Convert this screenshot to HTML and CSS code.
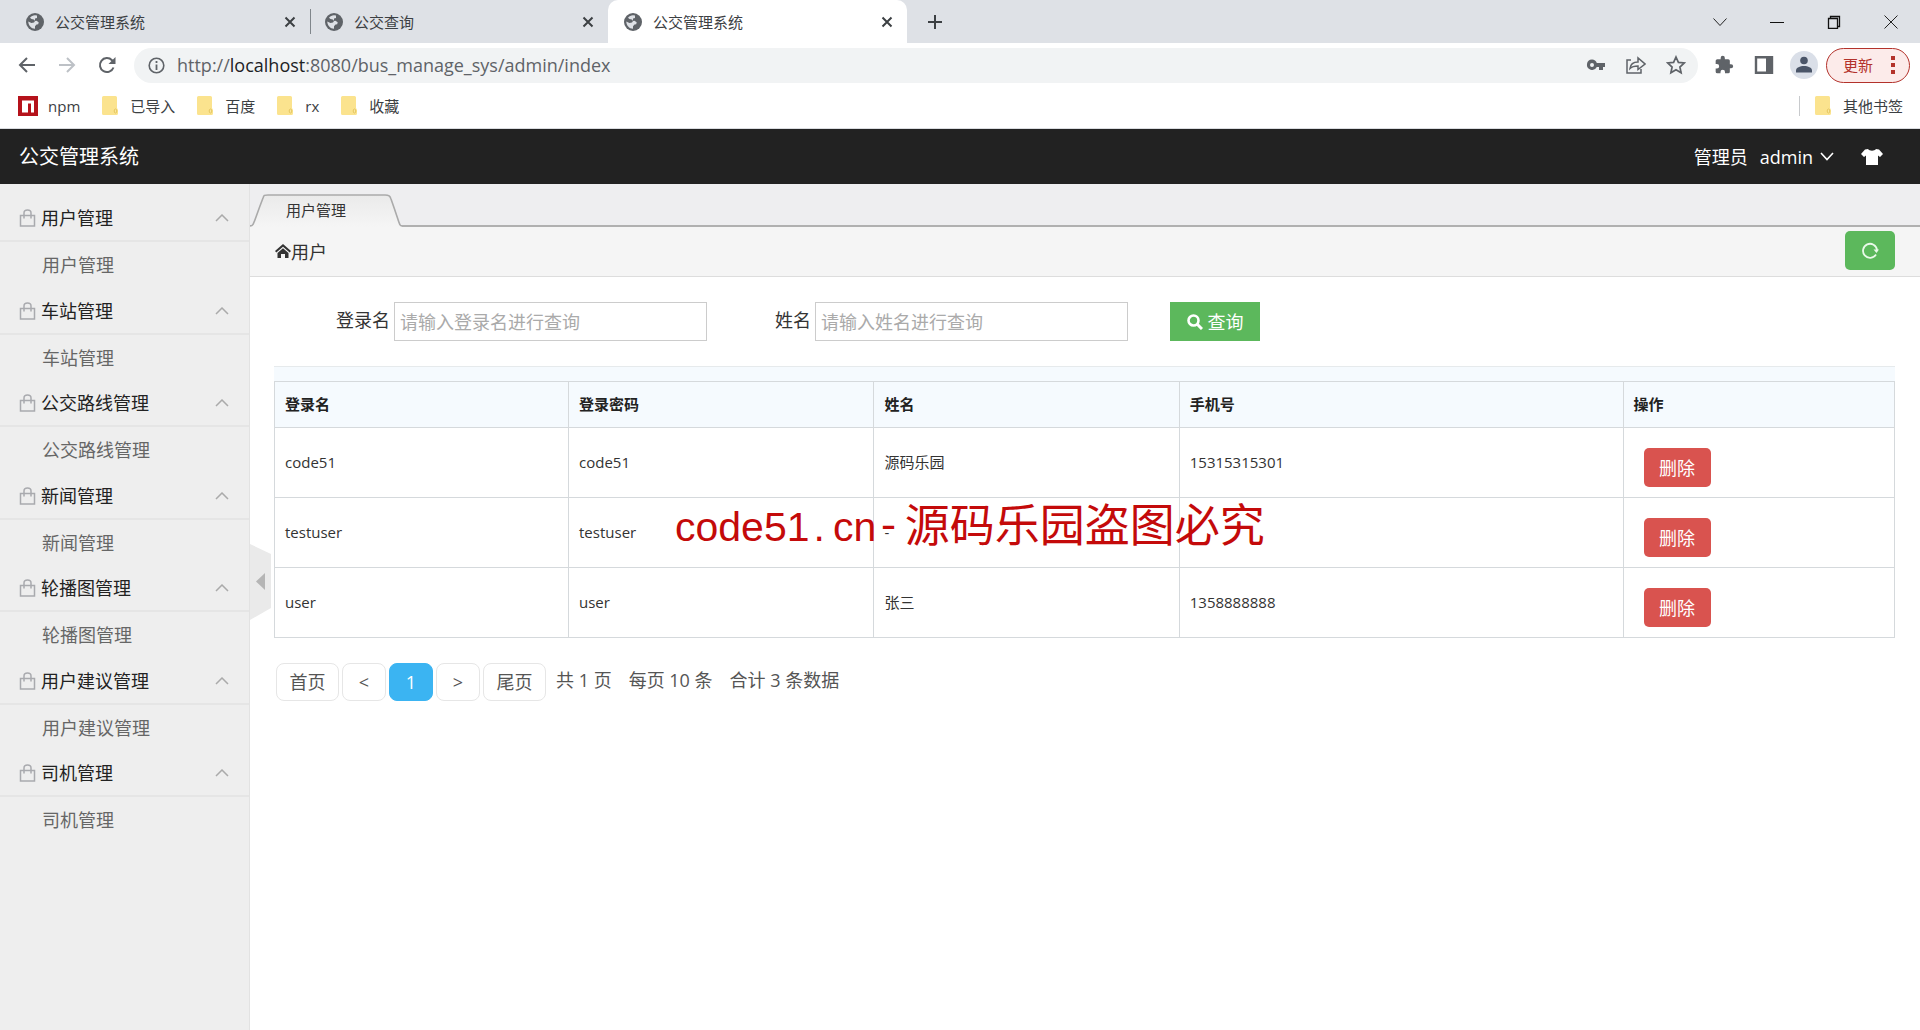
FILE: index.html
```html
<!DOCTYPE html>
<html lang="zh-CN">
<head>
<meta charset="utf-8">
<title>公交管理系统</title>
<link rel="stylesheet" href="styles.css">
</head>
<body>
<svg class="defs" width="0" height="0" aria-hidden="true">
  <symbol id="globe" viewBox="0 0 18 18"><circle cx="9" cy="9" r="9" fill="#5f6368"/><path d="M9 2.2c-2 .1-3.800.9-5 2.500l1.500 1.400 2.300.3 1.200 1.600-1 1.500-2.600.5L2.300 8.500c0 4 3 7.200 6.700 7.200v-2.500l1.500-1.700 1.700-.2.500-2-2.200-1.500-1.600.2.100-2.500 2-.500V2.500z" fill="#dee1e6"/></symbol>
  <symbol id="cross" viewBox="0 0 12 12"><path d="M1.500 1.500l9 9m0-9l-9 9" fill="none" stroke="#3c4043" stroke-width="2"/></symbol>
  <symbol id="folder" viewBox="0 0 16 19"><path d="M1.500 0h12A1.500 1.500 0 0 1 15 1.500V12l1 2v3.500a1.500 1.500 0 0 1-1.500 1.500h-13A1.500 1.500 0 0 1 0 17.500v-16A1.500 1.500 0 0 1 1.500 0z" fill="#fbe38e"/><ellipse cx="13.500" cy="15" rx="1.300" ry="2" fill="#fbe79d" stroke="#e5c65f"/></symbol>
  <symbol id="bag" viewBox="0 0 16 18"><path d="M1 6.500h14v10.500H1zM4.500 9.500V4a3.500 3 0 0 1 7 0v5.500" fill="none" stroke="#a9aaae" stroke-width="1.500"/></symbol>
  <symbol id="up" viewBox="0 0 14 8"><path d="M1 7l6-6 6 6" fill="none" stroke="#aaa" stroke-width="1.500"/></symbol>
</svg>

<div class="tabstrip">
  <div class="tab"><svg class="i18"><use href="#globe"/></svg><span class="tab-title">公交管理系统</span><button class="plain" aria-label="关闭"><svg class="i12"><use href="#cross"/></svg></button></div>
  <div class="tab tab-split"><svg class="i18"><use href="#globe"/></svg><span class="tab-title">公交查询</span><button class="plain" aria-label="关闭"><svg class="i12"><use href="#cross"/></svg></button></div>
  <div class="tab tab-active"><svg class="i18"><use href="#globe"/></svg><span class="tab-title">公交管理系统</span><button class="plain" aria-label="关闭"><svg class="i12"><use href="#cross"/></svg></button></div>
  <button class="plain new-tab" aria-label="新标签页"><svg width="16" height="16"><path d="M8 1v14M1 8h14" stroke="#3c4043" stroke-width="2"/></svg></button>
  <div class="win">
    <button class="plain" aria-label="搜索标签页"><svg width="14" height="14"><path d="M.5 3.500L7 10.500l6.500-7" fill="none" stroke="#222"/></svg></button>
    <button class="plain" aria-label="最小化"><svg width="14" height="14"><path d="M0 7.500h14" stroke="#111"/></svg></button>
    <button class="plain" aria-label="还原"><svg width="14" height="14"><path d="M1.500 3.500h9v10h-9zM3.500 3.500v-2h9v10h-2" fill="none" stroke="#111" stroke-width="1.300"/></svg></button>
    <button class="plain" aria-label="关闭窗口"><svg width="14" height="14"><path d="M.5.5l13 13m0-13l-13 13" stroke="#222"/></svg></button>
  </div>
</div>

<div class="toolbar">
  <div class="nav-buttons">
    <button class="plain" aria-label="后退"><svg width="18" height="18"><path d="M17 9H2m7-7L2 9l7 7" fill="none" stroke="#5f6368" stroke-width="2"/></svg></button>
    <button class="plain" aria-label="前进"><svg width="18" height="18"><path d="M1 9h15M9 2l7 7-7 7" fill="none" stroke="#bdc1c6" stroke-width="2"/></svg></button>
    <button class="plain" aria-label="刷新"><svg width="18" height="18"><path d="M15.500 11.500A7 7 0 1 1 14 4.200L16 6.500" fill="none" stroke="#5f6368" stroke-width="2"/><path d="M17.500 1v7h-7z" fill="#5f6368"/></svg></button>
  </div>
  <div class="omnibox">
    <svg width="17" height="17"><circle cx="8.500" cy="8.500" r="7.300" fill="none" stroke="#5f6368" stroke-width="1.600"/><path d="M8.500 7.500V13M8.500 4v2" stroke="#5f6368" stroke-width="1.800"/></svg>
    <span class="url">http://<b>localhost</b>:8080/bus_manage_sys/admin/index</span>
    <div class="omni-icons">
      <button class="plain" aria-label="密码"><svg width="20" height="18"><path fill-rule="evenodd" d="M6 3.500a5.200 5.200 0 0 1 4.800 3.500H19v4h-2v3h-4v-3h-2.200A5.200 5.200 0 1 1 6 3.500zM6 7a2 2 0 1 0 0 4 2 2 0 0 0 0-4z" fill="#5f6368"/></svg></button>
      <button class="plain" aria-label="分享"><svg width="20" height="18"><path d="M5 4H1v13h14v-4M4 12.500C4.500 8 7.500 6 12 6V2l7 6-7 5.500V10c-3.500 0-6 .5-8 2.500z" fill="none" stroke="#5f6368" stroke-width="1.500"/></svg></button>
      <button class="plain" aria-label="收藏此页"><svg width="20" height="20"><path d="M10 2l2.400 5.400 5.900.6-4.400 4 1.200 5.800-5.100-3-5.100 3 1.200-5.800-4.400-4 5.900-.6z" fill="none" stroke="#5f6368" stroke-width="1.700"/></svg></button>
    </div>
  </div>
  <div class="tool-icons">
    <button class="plain" aria-label="扩展程序"><svg width="20" height="20" viewBox="0 0 24 24"><path d="M20.500 11H19V7a2 2 0 0 0-2-2h-4V3.500a2.500 2.500 0 0 0-5 0V5H4a2 2 0 0 0-2 2v3.800h1.500a2.700 2.700 0 0 1 0 5.400H2V20a2 2 0 0 0 2 2h3.800v-1.500a2.700 2.700 0 0 1 5.400 0V22H17a2 2 0 0 0 2-2v-4h1.500a2.500 2.500 0 0 0 0-5z" fill="#5f6368"/></svg></button>
    <button class="plain" aria-label="侧边栏"><svg width="20" height="18"><path d="M2 1.200h16v15.600H2z" fill="none" stroke="#5f6368" stroke-width="2.400"/><path d="M12 1h6v16h-6z" fill="#5f6368"/></svg></button>
    <button class="plain avatar" aria-label="个人资料"><svg width="28" height="28"><circle cx="14" cy="14" r="14" fill="#dadfe8"/><circle cx="14" cy="9.500" r="3.800" fill="#4a5568"/><path d="M6 21.500v-2c0-3 4-4.500 8-4.500s8 1.500 8 4.500v2z" fill="#4a5568"/></svg></button>
  </div>
  <button class="update">更新<svg width="4" height="18"><path d="M0 0h4v4H0zM0 7h4v4H0zM0 14h4v4H0z" fill="#b3322b"/></svg></button>
</div>

<div class="bookmarks">
  <a href="#" class="mark"><svg class="npm" width="20" height="20"><path d="M0 0h20v20H0z" fill="#b5121b"/><path d="M4 4.500h12v12h-3v-9h-3v9H4z" fill="#fff"/></svg>npm</a>
  <a href="#" class="mark"><svg class="fold"><use href="#folder"/></svg>已导入</a>
  <a href="#" class="mark"><svg class="fold"><use href="#folder"/></svg>百度</a>
  <a href="#" class="mark"><svg class="fold"><use href="#folder"/></svg>rx</a>
  <a href="#" class="mark"><svg class="fold"><use href="#folder"/></svg>收藏</a>
  <a href="#" class="mark other"><svg class="fold"><use href="#folder"/></svg>其他书签</a>
</div>

<header class="header">
  <a href="#" class="brand">公交管理系统</a>
  <div class="account">
    <span>管理员</span>
    <button class="plain user">admin<svg width="14" height="9"><path d="M1 1l6 6.500L13 1" fill="none" stroke="#fff" stroke-width="1.600"/></svg></button>
    <button class="plain skin" aria-label="换肤"><svg width="22" height="17"><path d="M7 1c1.500 2.200 6.500 2.200 8 0l3 .5 4 4.500-3 3-2-1.500V17H5V7.500L3 9 0 6l4-4.500z" fill="#fff"/></svg></button>
  </div>
</header>

<div class="body">
  <nav class="sidebar">
    <section class="group"><button class="group-title"><svg class="bag"><use href="#bag"/></svg>用户管理<svg class="up"><use href="#up"/></svg></button><a href="#">用户管理</a></section>
    <section class="group"><button class="group-title"><svg class="bag"><use href="#bag"/></svg>车站管理<svg class="up"><use href="#up"/></svg></button><a href="#">车站管理</a></section>
    <section class="group"><button class="group-title"><svg class="bag"><use href="#bag"/></svg>公交路线管理<svg class="up"><use href="#up"/></svg></button><a href="#">公交路线管理</a></section>
    <section class="group"><button class="group-title"><svg class="bag"><use href="#bag"/></svg>新闻管理<svg class="up"><use href="#up"/></svg></button><a href="#">新闻管理</a></section>
    <section class="group"><button class="group-title"><svg class="bag"><use href="#bag"/></svg>轮播图管理<svg class="up"><use href="#up"/></svg></button><a href="#">轮播图管理</a></section>
    <section class="group"><button class="group-title"><svg class="bag"><use href="#bag"/></svg>用户建议管理<svg class="up"><use href="#up"/></svg></button><a href="#">用户建议管理</a></section>
    <section class="group"><button class="group-title"><svg class="bag"><use href="#bag"/></svg>司机管理<svg class="up"><use href="#up"/></svg></button><a href="#">司机管理</a></section>
  </nav>

  <main class="main">
    <button class="plain handle" aria-label="收起菜单"><svg width="21" height="76"><path d="M0 0l21 10v54L0 76z" fill="#eaeaea"/><path d="M15 29v17l-9-8.500z" fill="#b5b5b5"/></svg></button>
    <div class="page-tabs">
      <a href="#" class="page-tab"><svg class="tab-shape" width="152" height="33"><defs><linearGradient id="shade" x1="0" y1="0" x2="0" y2="1"><stop offset="0" stop-color="#eaeaea"/><stop offset="1" stop-color="#f5f5f5"/></linearGradient></defs><path d="M0 32C4 32 3 30 13 4c1-3 1-3 5-3h117c4 0 5 1 6 4 9 25 8 27 11 27v1H0z" fill="url(#shade)"/><path d="M0 32C4 32 3 30 13 4c1-3 1-3 5-3h117c4 0 5 1 6 4 9 25 8 27 11 27" fill="none" stroke="#aaa" stroke-width="1.600"/></svg><span>用户管理</span></a>
    </div>
    <div class="crumbs">
      <svg width="16" height="15"><path d="M8 0l8 7-1.300 1.500L8 2.700 1.300 8.500 0 7z" fill="#333"/><path d="M8 4.200l5.500 4.700V14H10v-4H6v4H2.500V8.900z" fill="#333"/></svg><span>用户</span>
      <button class="btn refresh" aria-label="刷新"><svg width="18" height="18"><path d="M15 12.500A7 7 0 1 1 16 8" fill="none" stroke="#e9f9e9" stroke-width="1.800"/><path d="M12.500 7.500h5.500L15.500 11z" fill="#e9f9e9"/></svg></button>
    </div>

    <div class="content">
      <form class="search">
        <label for="login">登录名</label><input id="login" type="text" placeholder="请输入登录名进行查询">
        <label for="name" class="second">姓名</label><input id="name" type="text" placeholder="请输入姓名进行查询">
        <button type="button" class="btn query"><svg width="16" height="16"><circle cx="6.500" cy="6.500" r="5" fill="none" stroke="#fff" stroke-width="2.600"/><path d="M10 10l5 5" stroke="#fff" stroke-width="3"/></svg>查询</button>
      </form>

      <div class="table-wrap">
        <table>
          <colgroup><col class="c1"><col class="c2"><col class="c2"><col class="c3"><col></colgroup>
          <thead><tr><th>登录名</th><th>登录密码</th><th>姓名</th><th>手机号</th><th>操作</th></tr></thead>
          <tbody>
            <tr><td>code51</td><td>code51</td><td>源码乐园</td><td>15315315301</td><td class="act"><button class="btn del">删除</button></td></tr>
            <tr><td>testuser</td><td>testuser</td><td>-</td><td></td><td class="act"><button class="btn del">删除</button></td></tr>
            <tr><td>user</td><td>user</td><td>张三</td><td>1358888888</td><td class="act"><button class="btn del">删除</button></td></tr>
          </tbody>
        </table>
        <div class="watermark">code51<span class="dot">.</span>cn<span class="dash">-</span><span class="han">源码乐园盗图必究</span></div>
      </div>

      <div class="pager">
        <button class="pg wide">首页</button><button class="pg">&lt;</button><button class="pg current">1</button><button class="pg">&gt;</button><button class="pg wide">尾页</button>
        <div class="totals"><span>共 1 页</span><span>每页 10 条</span><span>合计 3 条数据</span></div>
      </div>
    </div>
  </main>
</div>
</body>
</html>
```
FILE: styles.css
```css
* { box-sizing: border-box; }
body {
  margin: 0;
  min-height: 100vh;
  display: flex;
  flex-direction: column;
  background: #fff;
  color: #333;
  font-family: "Open Sans", "Noto Sans CJK SC", sans-serif;
  font-size: 18px;
  font-weight: 400;
  line-height: 24px;
}
button, input { font: inherit; color: inherit; }
a { color: inherit; text-decoration: none; }
svg { display: block; flex: none; }
.defs { position: absolute; }
.plain { border: 0; background: none; padding: 0; display: flex; align-items: center; }
.i18 { width: 18px; height: 18px; }
.i12 { width: 12px; height: 12px; }

/* browser tabs */
.tabstrip { height: 43px; background: #dee1e6; display: flex; align-items: center; font-size: 15px; color: #3c4043; }
.tab { width: 298px; height: 43px; display: flex; align-items: center; padding: 0 12px 0 16px; gap: 11px; }
.tab:first-child { margin-left: 10px; }
.tab-title { flex: 1; }
.tab-split { position: relative; padding-left: 17px; }
.tab-split::before { content: ""; position: absolute; left: 2px; top: 9px; width: 1px; height: 25px; background: #80868b; }
.tab-active { background: #fff; border-radius: 10px 10px 0 0; width: 299px; margin-left: 2px; padding-right: 14px; }
.new-tab { margin-left: 20px; }
.win { margin-left: auto; display: flex; gap: 43px; padding-right: 22px; height: 36px; }

/* address bar */
.toolbar { height: 44px; display: flex; align-items: center; }
.nav-buttons { display: flex; gap: 22px; padding: 0 18px; }
.omnibox { flex: 1; height: 35px; border-radius: 18px; background: #f1f3f4; display: flex; align-items: center; gap: 12px; padding: 0 12px 0 14px; }
.url { color: #5f6368; flex: 1; }
.url b { font-weight: inherit; color: #202124; }
.omni-icons { display: flex; gap: 20px; align-items: center; }
.tool-icons { display: flex; gap: 20px; align-items: center; padding: 0 8px 0 16px; }
.avatar { margin-left: -4px; }
.update { height: 35px; width: 84px; margin-right: 10px; border: 1px solid #b3322b; border-radius: 18px; background: #fcebea; color: #b3322b; font-size: 15px; display: flex; align-items: center; justify-content: space-between; padding: 0 14px 0 16px; }

/* bookmarks */
.bookmarks { height: 42px; border-bottom: 1px solid #dadce0; display: flex; align-items: center; gap: 22px; padding: 0 17px 4px 18px; font-size: 15px; color: #3c4043; }
.mark { display: flex; align-items: center; gap: 12px; }
.mark:first-child { gap: 10px; }
.fold { width: 16px; height: 19px; }
.other { margin-left: auto; border-left: 1px solid #c8cacd; padding-left: 15px; height: 20px; }

/* application header */
.header { height: 55px; background: #222; color: #fff; display: flex; align-items: center; justify-content: space-between; padding: 0 37px 0 19px; }
.brand { font-size: 20px; }
.account { display: flex; align-items: center; gap: 12px; }
.user { gap: 7px; }
.skin { margin-left: 15px; }

.body { flex: 1; display: flex; }
.sidebar { width: 250px; flex: none; background: #eee; border-right: 1px solid #e2e2e2; padding-top: 11px; }
.group { display: flex; flex-direction: column; height: 93px; }
.group:nth-child(even) { height: 92px; }
.group-title { height: 47px; flex: none; border: 0; border-bottom: 2px solid #e5e5e5; background: none; padding: 0 20px 0 19px; display: flex; align-items: center; gap: 5px; color: #222; }
.bag { width: 17px; height: 18px; }
.up { width: 14px; height: 8px; margin-left: auto; }
.group a { padding: 11px 0 0 42px; color: #666; }

.main { flex: 1; min-width: 0; position: relative; }
.handle { position: absolute; left: 0; top: 360px; }
.page-tabs { height: 43px; padding-top: 10px; background: linear-gradient(#b0b0b0, #b0b0b0) 0 41px / 100% 2px no-repeat #eeeef0; }
.page-tab { display: grid; width: 152px; height: 33px; font-size: 15px; }
.page-tab > * { grid-area: 1 / 1; }
.page-tab span { padding: 4px 0 0 36px; }
.crumbs { height: 50px; background: #f5f5f5; border-bottom: 1px solid #ddd; display: flex; align-items: center; padding: 0 25px; }
.btn { border: 0; color: #fff; height: 39px; display: flex; align-items: center; justify-content: center; padding: 0; }
.refresh { width: 50px; background: #5cb85c; border-radius: 5px; margin-left: auto; align-self: flex-start; margin-top: 4px; }

.content { padding: 25px 25px 0 24px; }
.search { display: flex; align-items: center; padding-left: 62px; gap: 4px; }
.search label { line-height: 36px; align-self: flex-start; }
.search .second { margin-left: 64px; }
.search input { width: 313px; height: 39px; border: 1px solid #ccc; padding: 0 5px; background: #fff; }
.search input::placeholder { color: #aaa; opacity: 1; }
.query { width: 90px; background: #5cb85c; gap: 5px; margin-left: 38px; }

.table-wrap { position: relative; margin-top: 25px; padding-top: 14px; background: #f5fafe; border-top: 1px solid #e6eaec; }
table { width: 100%; border-collapse: collapse; table-layout: fixed; font-size: 15px; background: #fff; }
.c1 { width: 18.15%; }
.c2 { width: 18.85%; }
.c3 { width: 27.4%; }
th, td { border: 1px solid #d5d9dc; text-align: left; padding: 0 10px 2px; }
th { height: 46px; background: #f5fafe; font-weight: 600; color: #222; }
td { height: 70px; }
.act { padding: 10px 20px 0; }
.del { width: 67px; background: #d9534f; border-radius: 5px; font-size: 18px; }
.watermark { position: absolute; left: 401px; top: 128px; font: 41px/64px "Liberation Sans", "Noto Sans CJK SC", sans-serif; color: #c40a0a; white-space: nowrap; display: flex; }
.dot { padding: 0 8px 0 4px; }
.dash { font-family: "Liberation Mono", monospace; padding-right: 4px; }
.han { font-family: "Noto Sans CJK SC", sans-serif; font-size: 45px; line-height: 56px; }

.pager { margin-top: 25px; padding-left: 2px; display: flex; gap: 3px; color: #555; }
.pg { width: 44px; height: 38px; border: 1px solid #e6e6e6; border-radius: 8px; background: #fff; padding: 0; }
.wide { width: 63px; }
.current { background: #3bb4f2; border-color: #3bb4f2; color: #fff; }
.totals { display: flex; gap: 17px; padding: 5px 0 0 7px; }
```
